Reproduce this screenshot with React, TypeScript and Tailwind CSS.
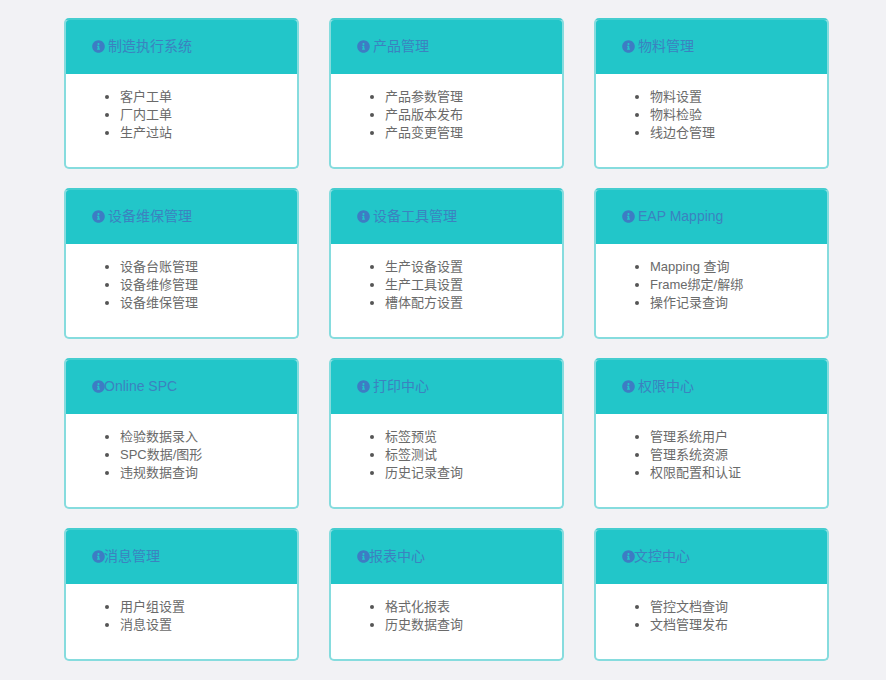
import { FaInfoCircle } from "react-icons/fa";

const cards: { title: string; gap: boolean; items: string[] }[] = [
  { title: "制造执行系统", gap: true, items: ["客户工单", "厂内工单", "生产过站"] },
  { title: "产品管理", gap: true, items: ["产品参数管理", "产品版本发布", "产品变更管理"] },
  { title: "物料管理", gap: true, items: ["物料设置", "物料检验", "线边仓管理"] },
  { title: "设备维保管理", gap: true, items: ["设备台账管理", "设备维修管理", "设备维保管理"] },
  { title: "设备工具管理", gap: true, items: ["生产设备设置", "生产工具设置", "槽体配方设置"] },
  { title: "EAP Mapping", gap: true, items: ["Mapping 查询", "Frame绑定/解绑", "操作记录查询"] },
  { title: "Online SPC", gap: false, items: ["检验数据录入", "SPC数据/图形", "违规数据查询"] },
  { title: "打印中心", gap: true, items: ["标签预览", "标签测试", "历史记录查询"] },
  { title: "权限中心", gap: true, items: ["管理系统用户", "管理系统资源", "权限配置和认证"] },
  { title: "消息管理", gap: false, items: ["用户组设置", "消息设置"] },
  { title: "报表中心", gap: false, items: ["格式化报表", "历史数据查询"] },
  { title: "文控中心", gap: false, items: ["管控文档查询", "文档管理发布"] },
];

export default function App() {
  return (
    <div className="min-h-[680px] bg-[#f2f2f5] pl-[64px] pt-[18px] font-['Liberation_Sans','Noto_Sans_CJK_SC',sans-serif]">
      <div className="grid w-[770px] grid-cols-[235px_235px_235px] items-start gap-x-[30px] gap-y-[19px]">
        {cards.map((card) => (
          <div
            key={card.title}
            className="overflow-hidden rounded-[5px] border-2 border-[#86dcde] border-t-[#45cdcf] bg-white"
          >
            <div className="flex h-[54px] items-center bg-[#22c6c9] pb-[2px] pl-[26px] text-[14px] text-[#3b82c0]">
              <FaInfoCircle className="mr-[-1px] h-[13px] w-[13px] shrink-0 text-[#3d7cc4]" />
              <span className={card.gap ? "ml-[4px]" : ""}>{card.title}</span>
            </div>
            <ul className="list-disc pb-[25px] pl-[54px] pt-[14px] text-[13px] leading-[18px] text-[#6a6a6a] marker:text-[#555555]">
              {card.items.map((item) => (
                <li key={item}>{item}</li>
              ))}
            </ul>
          </div>
        ))}
      </div>
    </div>
  );
}
